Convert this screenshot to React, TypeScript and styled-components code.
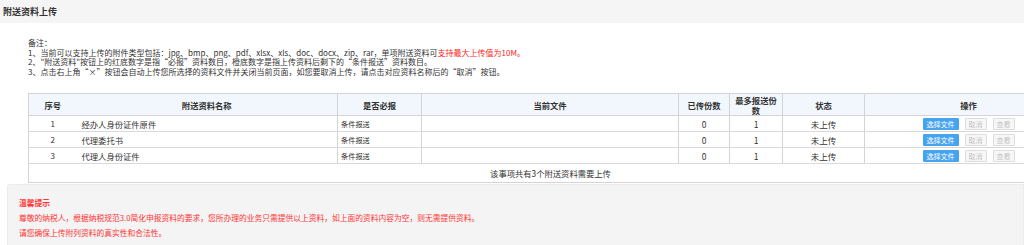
import React from 'react';
import styled, { createGlobalStyle } from 'styled-components';

const GlobalStyle = createGlobalStyle`
  html, body {
    margin: 0;
    padding: 0;
    background: #fff;
    overflow: hidden;
  }
  body {
    font-family: "Noto Sans CJK SC", "Noto Sans", sans-serif;
    color: #333;
  }
`;

const Page = styled.div`
  width: 1024px;
  height: 245px;
  overflow: hidden;
`;

const TitleBar = styled.div`
  height: 23px;
  background: #f5f5f5;
  display: flex;
  align-items: center;
  padding-left: 3px;
  font-size: 9px;
  font-weight: bold;
  color: #333;
`;

const Body = styled.div`
  padding: 15px 0 0 28px;
`;

const Notes = styled.div`
  font-size: 8px;
  color: #333;
  white-space: nowrap;
`;

const NoteLine = styled.div`
  height: 9.5px;
  line-height: 9.5px;
`;

const Red = styled.span`
  color: #f22;
`;

const Table = styled.table`
  margin-top: 17px;
  width: 1044px;
  border-collapse: collapse;
  table-layout: fixed;
  border: 1px solid #d4d4d4;
`;

const Th = styled.th<{ $line?: boolean }>`
  height: 21px;
  background: #f1f7fc;
  font-size: 8.3px;
  font-weight: bold;
  color: #333;
  line-height: 10px;
  text-align: center;
  padding: 0 2px;
  border-bottom: 1px solid #d4d4d4;
  border-left: ${p => (p.$line ? '1px solid #d4d4d4' : 'none')};
`;

const Td = styled.td<{ $align?: string; $line?: boolean; $size?: number }>`
  height: 15px;
  padding: 0 3px;
  font-size: ${p => p.$size ?? 8.5}px;
  color: #333;
  text-align: ${p => p.$align ?? 'center'};
  border-bottom: 1px solid #d9d9d9;
  border-left: ${p => (p.$line ? '1px solid #d4d4d4' : 'none')};
  white-space: nowrap;
`;

const FootCell = styled.td`
  height: 15.5px;
  font-size: 8.3px;
  text-align: center;
  color: #333;
`;

const Actions = styled.div`
  display: flex;
  justify-content: center;
  gap: 6px;
`;

const Btn = styled.button<{ $primary?: boolean }>`
  height: 12px;
  padding: 0 3px;
  font-family: inherit;
  font-size: 7px;
  line-height: 10px;
  border-radius: 1px;
  border: 1px solid ${p => (p.$primary ? '#46a3ee' : '#ddd')};
  background: ${p => (p.$primary ? '#46a3ee' : '#f7f7f7')};
  color: ${p => (p.$primary ? '#fff' : '#c4c4c4')};
  cursor: pointer;
`;

const Tips = styled.div`
  margin: 1px 0 0 7px;
  padding: 10px 11px 10px;
  background: #f4f4f4;
  border: 1px solid #ececec;
  border-radius: 3px 0 0 0;
  color: #f33;
  font-size: 7.75px;
  line-height: 15px;
  white-space: nowrap;
`;

const TipsTitle = styled.div`
  font-weight: bold;
`;

const rows = [
  { id: 1, name: '经办人身份证件原件' },
  { id: 2, name: '代理委托书' },
  { id: 3, name: '代理人身份证件' },
];

const App: React.FC = () => (
  <Page>
    <GlobalStyle />
    <TitleBar>附送资料上传</TitleBar>
    <Body>
      <Notes>
        <NoteLine>备注：</NoteLine>
        <NoteLine>
          1、当前可以支持上传的附件类型包括：jpg、bmp、png、pdf、xlsx、xls、doc、docx、zip、rar，单项附送资料可
          <Red>支持最大上传值为10M。</Red>
        </NoteLine>
        <NoteLine>2、"附送资料"按钮上的红底数字是指“必报”资料数目，橙底数字是指上传资料后剩下的“条件报送”资料数目。</NoteLine>
        <NoteLine>3、点击右上角“×”按钮会自动上传您所选择的资料文件并关闭当前页面，如您要取消上传，请点击对应资料名称后的“取消”按钮。</NoteLine>
      </Notes>
      <Table>
        <colgroup>
          <col style={{ width: 48 }} />
          <col style={{ width: 261 }} />
          <col style={{ width: 84 }} />
          <col style={{ width: 257 }} />
          <col style={{ width: 51 }} />
          <col style={{ width: 53 }} />
          <col style={{ width: 82 }} />
          <col style={{ width: 208 }} />
        </colgroup>
        <thead>
          <tr>
            <Th>序号</Th>
            <Th>附送资料名称</Th>
            <Th $line>是否必报</Th>
            <Th $line>当前文件</Th>
            <Th $line>已传份数</Th>
            <Th $line>最多报送份数</Th>
            <Th $line>状态</Th>
            <Th $line>操作</Th>
          </tr>
        </thead>
        <tbody>
          {rows.map(r => (
            <tr key={r.id}>
              <Td $size={8}>{r.id}</Td>
              <Td $align="left" $size={8.3} style={{ paddingLeft: 5 }}>{r.name}</Td>
              <Td $line $align="left" $size={7.2}>条件报送</Td>
              <Td $line />
              <Td $line>0</Td>
              <Td $line>1</Td>
              <Td $line>未上传</Td>
              <Td $line>
                <Actions>
                  <Btn $primary>选择文件</Btn>
                  <Btn>取消</Btn>
                  <Btn>查看</Btn>
                </Actions>
              </Td>
            </tr>
          ))}
          <tr>
            <FootCell colSpan={8}>该事项共有3个附送资料需要上传</FootCell>
          </tr>
        </tbody>
      </Table>
    </Body>
    <Tips>
      <TipsTitle>温馨提示</TipsTitle>
      <div>尊敬的纳税人，根据纳税规范3.0简化申报资料的要求，您所办理的业务只需提供以上资料，如上面的资料内容为空，则无需提供资料。</div>
      <div>请您确保上传附列资料的真实性和合法性。</div>
    </Tips>
  </Page>
);

export default App;
